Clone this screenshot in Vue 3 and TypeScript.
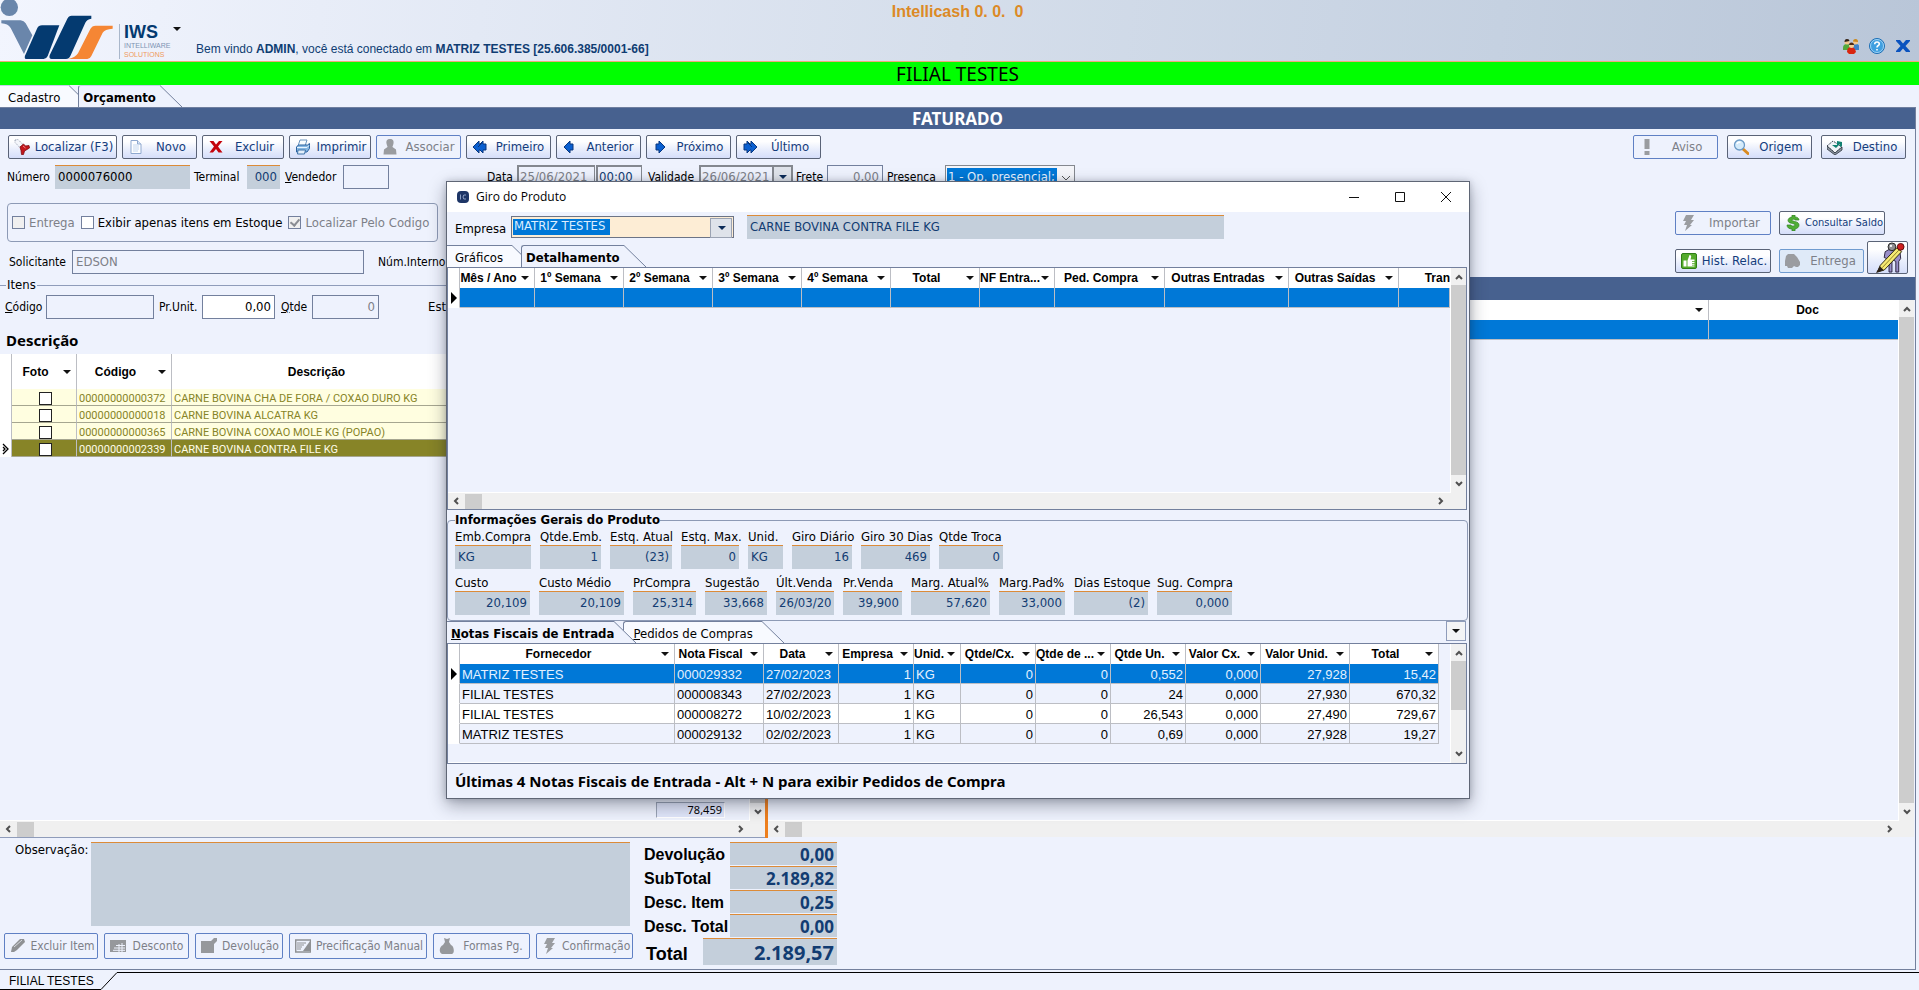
<script setup lang="ts">
interface ToolButton {
  label: string
  icon: string
  size: string
  disabled?: boolean
}
interface Field {
  label: string
  value: string
  width: number
  left?: boolean
}
interface Column {
  title: string
  width: number
  align?: string
}

const icons: Record<string, string> = {
  torch:
    '<path d="M1 1l3-.5 5 5-3 3-5-5z" fill="#f4f6fb" stroke="#8a94a6" stroke-width=".8" stroke-dasharray="1.500 1"/><path d="M6 8l3.500-3 2 2 3.500-.5.5 2.500-5 3-1 3.500H7.500l-.5-4z" fill="#c3161c" stroke="#7d0a10" stroke-width=".8"/><path d="M9 7l2.500 2" stroke="#f0868a"/>',
  page:
    '<path d="M3 1.500h6.500l3.500 3.500v9.500H3z" fill="#fdfeff" stroke="#8fa9cf"/><path d="M9.500 1.500V5H13" fill="#dbe8f8" stroke="#8fa9cf"/><path d="M5 6h6M5 8h6M5 10h6M5 12h5" stroke="#c5d8ef"/>',
  cross: '<path d="M1.500 2h4l2.500 3.500L11 2h3.500L10 7.500l4.500 6h-4L8 10l-3 3.500H1.500L6 7.500z" fill="#c4040c"/>',
  printer:
    '<path d="M5 1h7l-2 6H3z" fill="#fafdff" stroke="#6b93bd"/><path d="M1.500 8l2-2h9l2-1.500v5L12 13H1.500z" fill="#86b7e2" stroke="#2b629f"/><path d="M2 8.500h10l2-2" stroke="#e8f4ff" fill="none"/><path d="M3 11h7.500l-1 4H2.500z" fill="#e3effa" stroke="#3f73aa"/>',
  person:
    '<path d="M8 0c3 0 4 2 3.500 4.500-.4 2-1 2.500-1 3.500l3.500 2.500 .5 5h-13l.5-5 3.500-2.500c0-1-.6-1.500-1-3.500C4 2 5 0 8 0z" fill="#9a9ca0"/>',
  first:
    '<path d="M1 8l6-6v3h1L11 2v3h3v6h-3v3L8 11H7v3z" fill="#0a5fd0" stroke="#08367e"/><path d="M6 8l4-4" stroke="#08367e"/>',
  prev: '<path d="M2 8l6-6v3h3v6H8v3z" fill="#0a5fd0" stroke="#08367e"/>',
  next: '<path d="M13 8L7 2v3H4v6h3v3z" fill="#0a5fd0" stroke="#08367e"/>',
  last: '<path d="M15 8L9 2v3H8L5 2v3H2v6h3v3l3-3h1v3z" fill="#0a5fd0" stroke="#08367e"/><path d="M10 8L6 4" stroke="#08367e"/>',
  alert: '<path d="M5.500 0h5v10h-5zM5.500 12h5v4h-5z" fill="#9a9ca0"/>',
  lens:
    '<path d="M10 10l5 4.500" stroke="#d98a1f" stroke-width="3" stroke-linecap="round"/><circle cx="6.500" cy="6" r="5" fill="#d4ebfb" stroke="#6b9ac6" stroke-width="1.300"/><path d="M4 5c.5-1.500 2-2 3.500-1.500" stroke="#fff" fill="none" stroke-width="1.500"/>',
  destination:
    '<path d="M0 7l6-5 9 6-7 6z" fill="#f1f3f6" stroke="#3c4653" stroke-dasharray="2 1"/><path d="M0 7v3l8 6 7-5V8L8 14z" fill="#8d96a2" stroke="#2b323c" stroke-width=".8"/><path d="M5 6h5V2l5 1v4l-2 1V5l-4 4z" fill="#128171"/>',
  bolt: '<path d="M5 0h8L10 5h3L9 10h2l-7 6 2-6H3l2-4H2z" fill="#9a9ca0"/>',
  dollar:
    '<path d="M7 0h3v2c2 0 4 1 4 3h-4c0-1-3-1-3 .2C7 6.600 14 6 14 10c0 2.500-2 3.500-4 4v2H7v-2c-3 0-5-1.500-5-4h4c0 1.500 4 1.500 4 0C10 8 3 9 3 5.500 3 3.500 5 2.200 7 2z" fill="#4fae35" stroke="#2f8023" stroke-width=".7"/>',
  thumb:
    '<rect x=".5" y=".5" width="15" height="15" rx="1.500" fill="#55ab2c" stroke="#2f7d17"/><path d="M2.500 7.500h3v6h-3zM6.500 7.500L8.500 2c1.500 0 2 1 1.500 2.500L9.500 6.500H13.500v7h-7z" fill="#fff"/><path d="M11 8.500h3M11 10.500h3M11 12.200h3" stroke="#55ab2c" stroke-width=".8"/>',
  truck: '<path d="M1 3l2-2h6l3 3 3 5v3l-2 2h-2l-2-1-2 2H3l-1-2H0V8z" fill="#9a9ca0"/>',
  eraser: '<path d="M2 9l8-8h4l1 3-8 8-3 2H1z" fill="#8f9194"/><path d="M4 9l8-7" stroke="#d6d9de"/>',
  table:
    '<path d="M0 2h16v12H0z" fill="#96989c"/><path d="M6 7.500h9M4 10h11M3 12.300h12M9 6v8M12 5v9" stroke="#eef2fd"/>',
  box: '<path d="M0 3h10l3-3h3v3l-3 3v9H0z" fill="#96989c"/>',
  sheet:
    '<path d="M.7 2h15v12H.700z" fill="#eef2fd" stroke="#8f9194" stroke-width="1.500"/><path d="M15 3v10H8z" fill="#8f9194"/><path d="M2 5h9M2 7h7M2 9h5M2 11h4" stroke="#8f9194"/>',
  bag: '<path d="M5 0l3 1 3-1-1 4 2 3c3 1 4 8 1 9H3C-1 14 1 8 4 7l2-3z" fill="#96989c"/>',
}

const navButtons: ToolButton[] = [
  { label: 'Localizar (F3)', icon: 'torch', size: 'w109' },
  { label: 'Novo', icon: 'page', size: 'w75' },
  { label: 'Excluir', icon: 'cross', size: 'w82' },
  { label: 'Imprimir', icon: 'printer', size: 'w82' },
  { label: 'Associar', icon: 'person', size: 'w85', disabled: true },
  { label: 'Primeiro', icon: 'first', size: 'w85' },
  { label: 'Anterior', icon: 'prev', size: 'w85' },
  { label: 'Próximo', icon: 'next', size: 'w85' },
  { label: 'Último', icon: 'last', size: 'w85' },
]
const sideButtons: ToolButton[] = [
  { label: 'Aviso', icon: 'alert', size: 'w85', disabled: true },
  { label: 'Origem', icon: 'lens', size: 'w85' },
  { label: 'Destino', icon: 'destination', size: 'w85' },
]
const footButtons: ToolButton[] = [
  { label: 'Excluir Item', icon: 'eraser', size: 'w94' },
  { label: 'Desconto', icon: 'table', size: 'w85' },
  { label: 'Devolução', icon: 'box', size: 'w88' },
  { label: 'Precificação Manual', icon: 'sheet', size: 'w138' },
  { label: 'Formas Pg.', icon: 'bag', size: 'w97' },
  { label: 'Confirmação', icon: 'bolt', size: 'w97' },
]

const itemRows = [
  { code: '00000000000372', name: 'CARNE BOVINA CHA DE FORA / COXAO DURO KG' },
  { code: '00000000000018', name: 'CARNE BOVINA ALCATRA KG' },
  { code: '00000000000365', name: 'CARNE BOVINA COXAO MOLE KG (POPAO)' },
  { code: '00000000002339', name: 'CARNE BOVINA CONTRA FILE KG' },
]

const turnoverColumns: Column[] = [
  { title: 'Mês / Ano', width: 75 },
  { title: '1º Semana', width: 89 },
  { title: '2º Semana', width: 89 },
  { title: '3º Semana', width: 89 },
  { title: '4º Semana', width: 89 },
  { title: 'Total', width: 89 },
  { title: 'NF Entra...', width: 75 },
  { title: 'Ped. Compra', width: 110 },
  { title: 'Outras Entradas', width: 124 },
  { title: 'Outras Saídas', width: 110 },
]

const infoRows: Field[][] = [
  [
    { label: 'Emb.Compra', value: 'KG', width: 76, left: true },
    { label: 'Qtde.Emb.', value: '1', width: 61 },
    { label: 'Estq. Atual', value: '(23)', width: 62 },
    { label: 'Estq. Max.', value: '0', width: 58 },
    { label: 'Unid.', value: 'KG', width: 35, left: true },
    { label: 'Giro Diário', value: '16', width: 60 },
    { label: 'Giro 30 Dias', value: '469', width: 69 },
    { label: 'Qtde Troca', value: '0', width: 64 },
  ],
  [
    { label: 'Custo', value: '20,109', width: 75 },
    { label: 'Custo Médio', value: '20,109', width: 85 },
    { label: 'PrCompra', value: '25,314', width: 63 },
    { label: 'Sugestão', value: '33,668', width: 62 },
    { label: 'Últ.Venda', value: '26/03/20', width: 58, left: true },
    { label: 'Pr.Venda', value: '39,900', width: 59 },
    { label: 'Marg. Atual%', value: '57,620', width: 79 },
    { label: 'Marg.Pad%', value: '33,000', width: 66 },
    { label: 'Dias Estoque', value: '(2)', width: 74 },
    { label: 'Sug. Compra', value: '0,000', width: 75 },
  ],
]

const invoiceColumns: Column[] = [
  { title: 'Fornecedor', width: 215 },
  { title: 'Nota Fiscal', width: 89 },
  { title: 'Data', width: 75 },
  { title: 'Empresa', width: 75, align: 'num' },
  { title: 'Unid.', width: 47 },
  { title: 'Qtde/Cx.', width: 75, align: 'num' },
  { title: 'Qtde de ...', width: 75, align: 'num' },
  { title: 'Qtde Un.', width: 75, align: 'num' },
  { title: 'Valor Cx.', width: 75, align: 'num' },
  { title: 'Valor Unid.', width: 89, align: 'num' },
  { title: 'Total', width: 89, align: 'num' },
]
const invoices = [
  ['MATRIZ TESTES', '000029332', '27/02/2023', '1', 'KG', '0', '0', '0,552', '0,000', '27,928', '15,42'],
  ['FILIAL TESTES', '000008343', '27/02/2023', '1', 'KG', '0', '0', '24', '0,000', '27,930', '670,32'],
  ['FILIAL TESTES', '000008272', '10/02/2023', '1', 'KG', '0', '0', '26,543', '0,000', '27,490', '729,67'],
  ['MATRIZ TESTES', '000029132', '02/02/2023', '1', 'KG', '0', '0', '0,69', '0,000', '27,928', '19,27'],
]

const totals = [
  { id: 't-dev', label: 'Devolução', value: '0,00' },
  { id: 't-sub', label: 'SubTotal', value: '2.189,82' },
  { id: 't-item', label: 'Desc. Item', value: '0,25' },
  { id: 't-desc', label: 'Desc. Total', value: '0,00' },
]

const px = (n: number) => ({ width: n + 'px' })
</script>

<template>
  <div class="app">
    <header class="top">
      <svg class="logo" viewBox="0 0 342 180" aria-hidden="true">
        <circle cx="28" cy="22" r="26" fill="#6a86ab" />
        <path d="M4 61H62Q72 62 77 70L97 106 72 162 32 84Q24 71 4 70Z" fill="#6a86ab" />
        <path d="M178 76H126Q116 76 111 86L75 167Q72 177 80 177H131Q139 177 143 168Z" fill="#043a70" />
        <path d="M274 47H215Q206 47 202 56L149 166Q146 177 155 177H198Q207 177 211 168L256 68Q261 57 274 56Z" fill="#043a70" />
        <path d="M338 77H287Q276 77 271 87L234 160Q227 172 205 177H262Q270 177 274 168L308 98Q314 87 338 86Z" fill="#f58634" />
      </svg>
      <div class="brand">
        <strong>IWS</strong>
        <span>INTELLIWARE</span>
        <em>SOLUTIONS</em>
      </div>
      <button class="caret-btn" aria-label="Menu"><i class="caret"></i></button>
      <p class="welcome">
        Bem vindo <b>ADMIN</b>, você está conectado em <b>MATRIZ TESTES [25.606.385/0001-66]</b>
      </p>
      <h1 class="product">Intellicash 0. 0. &nbsp;0</h1>
      <div class="session">
        <button aria-label="Usuários">
          <svg viewBox="0 0 16 16">
            <path d="M0 10q0-4 4-4t4 4v2H0z" fill="#54a83a" />
            <path d="M9 10q0-4 4-4t3 4v2H9z" fill="#3d82c9" />
            <circle cx="4" cy="4" r="2.500" fill="#f3c68c" />
            <path d="M1.500 4q0-3 2.500-3t2.500 2z" fill="#2e1e14" />
            <circle cx="12.500" cy="4" r="2.500" fill="#f3c68c" />
            <path d="M10 3.500q0-2.500 2.500-2.500t2.500 3z" fill="#c9891f" />
            <path d="M4 14q0-5 4-5t5 5l-2 2H6z" fill="#d9260f" />
            <circle cx="8.500" cy="7.500" r="2.500" fill="#f6cd96" />
            <path d="M6 7q0-2.500 2.500-2.500T11 7z" fill="#4f2a14" />
          </svg>
        </button>
        <button aria-label="Ajuda">
          <svg viewBox="0 0 16 16">
            <circle cx="8" cy="8" r="7.500" fill="#3f9fe0" stroke="#1c6fb5" />
            <circle cx="8" cy="8" r="6.500" fill="none" stroke="#9fd2f5" />
            <path d="M5.700 6.200Q5.800 4 8 4t2.300 2Q10.300 7 9 7.800 8 8.400 8 9.500M8 11v1.500" fill="none" stroke="#fff" stroke-width="1.600" />
          </svg>
        </button>
        <button aria-label="Fechar">
          <svg viewBox="0 0 16 16">
            <path d="M1 2h4l3 3.500L11 2h4v1l-4.500 5 4.500 5v1h-4l-3-3.500L5 14H1v-1l4.500-5L1 3z" fill="#0a53bf" />
          </svg>
        </button>
      </div>
    </header>

    <div class="branch">FILIAL TESTES</div>

    <nav class="tabs main-tabs">
      <button class="tab">
        <span>Cadastro</span>
        <svg viewBox="0 0 22 22"><path d="M0 0L22 22H0Z" fill="#f8faff" /><path d="M0 .5L22 22" /></svg>
      </button>
      <button class="tab active">
        <span>Orçamento</span>
        <svg viewBox="0 0 22 22"><path d="M0 0L22 22H0Z" fill="#eef2fd" /><path d="M0 .5L22 22" /></svg>
      </button>
    </nav>

    <main class="page">
      <h2 class="bar">FATURADO</h2>

      <div class="toolbar">
        <button v-for="b in navButtons" :key="b.label" class="btn" :class="b.size" :disabled="b.disabled">
          <svg viewBox="0 0 16 16" v-html="icons[b.icon]"></svg><span>{{ b.label }}</span>
        </button>
        <div class="side">
          <button v-for="b in sideButtons" :key="b.label" class="btn" :class="b.size" :disabled="b.disabled">
            <svg viewBox="0 0 16 16" v-html="icons[b.icon]"></svg><span>{{ b.label }}</span>
          </button>
        </div>
      </div>

      <div class="order">
        <div class="order-form">
          <div class="line heading-line">
            <label class="f-num"><span>Número</span><input class="ro black" value="0000076000" readonly /></label>
            <label class="f-term"><span>Terminal</span><input class="ro num" value="000" readonly /></label>
            <label class="f-vend"><span><u>V</u>endedor</span><input class="box" value="" /></label>
            <label class="f-data"><span>Data</span><input class="box gray sunken" value="25/06/2021" disabled /></label>
            <input class="box time sunken" value="00:00" aria-label="Hora" />
            <label class="f-val"><span>Validade</span><input class="box gray sunken" value="26/06/2021" disabled /></label>
            <button class="drop" aria-label="Abrir calendário" disabled><i class="caret navy"></i></button>
            <label class="f-frete"><span>Frete</span><input class="box gray num" value="0,00" disabled /></label>
            <label class="f-pres">
              <span>Presença</span><select><option>1 - Op. presencial;</option></select>
              <svg viewBox="0 0 10 6"><path d="M1 1l4 4 4-4" /></svg>
            </label>
          </div>
          <div class="checks">
            <label class="gray"><input type="checkbox" disabled /><span>Entrega</span></label>
            <label><input type="checkbox" /><span>Exibir apenas itens em Estoque</span></label>
            <label class="gray"><input type="checkbox" checked disabled /><span>Localizar Pelo Codigo</span></label>
          </div>
          <div class="line request">
            <label class="f-sol"><span>Solicitante</span><input class="box gray" value="EDSON" disabled /></label>
            <label class="f-int"><span>Núm.Interno</span><input class="box" value="" /></label>
          </div>
        </div>
        <div class="order-actions">
          <div>
            <button class="btn w96" disabled><svg viewBox="0 0 16 16" v-html="icons.bolt"></svg><span>Importar</span></button>
            <button class="btn w106 small"><svg viewBox="0 0 16 16" v-html="icons.dollar"></svg><span>Consultar Saldo</span></button>
          </div>
          <div class="second">
            <button class="btn w96"><svg viewBox="0 0 16 16" v-html="icons.thumb"></svg><span>Hist. Relac.</span></button>
            <button class="btn w85 tinted" disabled><svg viewBox="0 0 16 16" v-html="icons.truck"></svg><span>Entrega</span></button>
            <button class="btn pencil" aria-label="Editar">
              <svg viewBox="0 0 34 32">
                <path d="M12 10l7-4 8 1 1 10-2 3v11h-3V20l-4-2v13h-3V18l-5-2z" fill="#9a8fc9" stroke="#2a2440" />
                <circle cx="19" cy="5" r="4" fill="#8f8f92" stroke="#222" />
                <circle cx="18" cy="4" r="1.200" fill="#fff" />
                <path d="M24 6l5 4L11 29l-7 2 3-7z" fill="#f6ea73" stroke="#2b2710" />
                <path d="M26.500 8L9 26.500" stroke="#8d8126" />
                <path d="M6.500 25l4 4-8 3z" fill="#2b2118" />
                <circle cx="28" cy="5" r="3.500" fill="#cf1f1f" stroke="#5a0d0d" />
              </svg>
            </button>
          </div>
        </div>
      </div>

      <div class="panes">
        <section class="pane-left">
          <fieldset class="itens">
            <legend>Itens</legend>
            <label class="f-cod"><span><u>C</u>ódigo</span><input class="box" value="" /></label>
            <label class="f-unit"><span>Pr.Unit.</span><input class="box white num" value="0,00" /></label>
            <label class="f-qtde"><span><u>Q</u>tde</span><input class="box gray num" value="0" disabled /></label>
            <span class="stock">Estoque</span>
          </fieldset>
          <h3>Descrição</h3>
          <div class="list-area">
            <div class="list">
              <table class="items">
                <colgroup><col class="c12" /><col class="c65" /><col class="c95" /><col class="c307" /><col /></colgroup>
                <thead>
                  <tr>
                    <th></th>
                    <th><div><span>Foto</span><i class="caret"></i></div></th>
                    <th><div><span>Código</span><i class="caret"></i></div></th>
                    <th><div><span>Descrição</span><i class="caret"></i></div></th>
                    <th></th>
                  </tr>
                </thead>
                <tbody>
                  <tr v-for="(r, i) in itemRows" :key="r.code" :class="{ sel: i === 3 }">
                    <td class="mark">
                      <svg v-if="i === 3" viewBox="0 0 8 12"><path d="M1 1l5 5-5 5M1 4l2 2-2 2" fill="none" stroke="#000" stroke-width="1.300" /></svg>
                    </td>
                    <td class="pic"><input type="checkbox" :aria-label="'Foto ' + r.code" /></td>
                    <td>{{ r.code }}</td>
                    <td>{{ r.name }}</td>
                    <td></td>
                  </tr>
                </tbody>
              </table>
              <div class="sum"><output>78,459</output></div>
            </div>
            <div class="vs">
              <svg viewBox="0 0 8 8"><path d="M1 6l3-3 3 3" /></svg><i class="fill"></i>
              <svg viewBox="0 0 8 8"><path d="M1 2l3 3 3-3" /></svg>
            </div>
          </div>
          <div class="hs">
            <svg viewBox="0 0 8 8"><path d="M6 1L3 4l3 3" /></svg><i></i>
            <svg class="end" viewBox="0 0 8 8"><path d="M2 1l3 3-3 3" /></svg>
          </div>
        </section>
        <div class="splitter"></div>
        <section class="pane-right">
          <div class="bar"></div>
          <div class="list-area">
            <div class="list">
              <table class="docs">
                <colgroup><col /><col class="c189" /></colgroup>
                <thead><tr><th><div><span></span><i class="caret"></i></div></th><th class="doc">Doc</th></tr></thead>
                <tbody><tr><td></td><td></td></tr></tbody>
              </table>
            </div>
            <div class="vs">
              <svg viewBox="0 0 8 8"><path d="M1 6l3-3 3 3" /></svg><i class="fill"></i>
              <svg viewBox="0 0 8 8"><path d="M1 2l3 3 3-3" /></svg>
            </div>
          </div>
          <div class="hs">
            <svg viewBox="0 0 8 8"><path d="M6 1L3 4l3 3" /></svg><i></i>
            <svg class="end" viewBox="0 0 8 8"><path d="M2 1l3 3-3 3" /></svg>
          </div>
        </section>
      </div>

      <div class="foot">
        <div class="notes">
          <label class="obs"><span>Observação:</span><textarea readonly></textarea></label>
          <div class="foot-btns">
            <button v-for="b in footButtons" :key="b.label" class="btn tall" :class="b.size" disabled>
              <svg viewBox="0 0 16 16" v-html="icons[b.icon]"></svg><span>{{ b.label }}</span>
            </button>
          </div>
        </div>
        <div class="totals">
          <div v-for="t in totals" :key="t.id" class="t-row">
            <label :for="t.id">{{ t.label }}</label><input :id="t.id" class="ro num" :value="t.value" readonly />
          </div>
          <div class="t-row grand"><label for="t-all">Total</label><input id="t-all" class="ro num" value="2.189,57" readonly /></div>
        </div>
      </div>
    </main>

    <footer class="status">
      <span>FILIAL TESTES</span>
      <svg viewBox="0 0 16 18"><path d="M0 17.500L16 .5" /></svg>
      <i></i>
    </footer>

    <section class="dialog" role="dialog" aria-label="Giro do Produto">
      <header class="title">
        <svg class="app-icon" viewBox="0 0 12 14">
          <rect y="1" width="12" height="12" rx="4" fill="#1d3566" />
          <path d="M3.500 4.500v5M9 5Q6 4 6 7t3 2" fill="none" stroke="#8c9fc4" />
        </svg>
        <h2>Giro do Produto</h2>
        <button aria-label="Minimizar"><svg viewBox="0 0 12 12"><path d="M1 6.500h10" /></svg></button>
        <button aria-label="Maximizar"><svg viewBox="0 0 12 12"><path d="M1.500 1.500h9v9h-9z" /></svg></button>
        <button aria-label="Fechar"><svg viewBox="0 0 12 12"><path d="M1 1l10 10M11 1L1 11" /></svg></button>
      </header>

      <div class="company">
        <label><span>Empresa</span><select><option>MATRIZ TESTES</option></select></label>
        <input class="ro" value="CARNE BOVINA CONTRA FILE KG" aria-label="Produto" readonly />
      </div>

      <nav class="tabs upper">
        <button class="tab"><span>Gráficos</span><svg viewBox="0 0 22 22"><path d="M0 0L22 22H0Z" fill="#f8faff" /><path d="M0 .5L22 22" /></svg></button>
        <button class="tab active"><span>Detalhamento</span><svg viewBox="0 0 22 22"><path d="M0 0L22 22H0Z" fill="#eef2fd" /><path d="M0 .5L22 22" /></svg></button>
      </nav>

      <div class="panel turnover">
        <div class="list-area">
          <div class="list">
            <table class="grid stretch">
              <colgroup><col class="c12" /><col v-for="c in turnoverColumns" :key="c.title" :style="px(c.width)" /><col /></colgroup>
              <thead>
                <tr>
                  <th></th>
                  <th v-for="c in turnoverColumns" :key="c.title"><div><span>{{ c.title }}</span><i class="caret"></i></div></th>
                  <th class="cut">Tran</th>
                </tr>
              </thead>
              <tbody>
                <tr class="sel"><td class="mark"><i class="pointer"></i></td><td v-for="n in 11" :key="n"></td></tr>
              </tbody>
            </table>
          </div>
          <div class="vs">
            <svg viewBox="0 0 8 8"><path d="M1 6l3-3 3 3" /></svg><i class="fill"></i>
            <svg viewBox="0 0 8 8"><path d="M1 2l3 3 3-3" /></svg>
          </div>
        </div>
        <div class="hs corner">
          <svg viewBox="0 0 8 8"><path d="M6 1L3 4l3 3" /></svg><i></i>
          <svg class="end" viewBox="0 0 8 8"><path d="M2 1l3 3-3 3" /></svg>
        </div>
      </div>

      <fieldset class="info">
        <legend>Informações Gerais do Produto</legend>
        <div v-for="(row, i) in infoRows" :key="i" class="info-row">
          <label v-for="f in row" :key="f.label" :style="px(f.width)">
            <span>{{ f.label }}</span><input class="ro" :class="{ num: !f.left }" :value="f.value" readonly />
          </label>
        </div>
      </fieldset>

      <nav class="tabs lower">
        <button class="tab active"><span><u>N</u>otas Fiscais de Entrada</span><svg viewBox="0 0 22 22"><path d="M0 0L22 22H0Z" fill="#eef2fd" /><path d="M0 .5L22 22" /></svg></button>
        <button class="tab"><span><u>P</u>edidos de Compras</span><svg viewBox="0 0 22 22"><path d="M0 0L22 22H0Z" fill="#f8faff" /><path d="M0 .5L22 22" /></svg></button>
        <button class="more" aria-label="Mais abas"><i class="caret"></i></button>
      </nav>

      <div class="panel invoices">
        <div class="list-area">
          <div class="list">
            <table class="grid">
              <colgroup><col class="c12" /><col v-for="c in invoiceColumns" :key="c.title" :style="px(c.width)" /></colgroup>
              <thead>
                <tr>
                  <th></th>
                  <th v-for="c in invoiceColumns" :key="c.title"><div><span>{{ c.title }}</span><i class="caret"></i></div></th>
                </tr>
              </thead>
              <tbody>
                <tr v-for="(r, i) in invoices" :key="r[1]" :class="{ sel: i === 0 }">
                  <td class="mark"><i v-if="i === 0" class="pointer"></i></td>
                  <td v-for="(v, c) in r" :key="c" :class="invoiceColumns[c].align">{{ v }}</td>
                </tr>
              </tbody>
            </table>
          </div>
          <div class="vs">
            <svg viewBox="0 0 8 8"><path d="M1 6l3-3 3 3" /></svg><i class="part"></i>
            <svg class="end" viewBox="0 0 8 8"><path d="M1 2l3 3 3-3" /></svg>
          </div>
        </div>
      </div>

      <p class="hint">Últimas 4 Notas Fiscais de Entrada - Alt + N para exibir Pedidos de Compra</p>
    </section>
  </div>
</template>

<style>
body {
  background: #eef2fd;
}
</style>

<style scoped>
* {
  box-sizing: border-box;
}
.app {
  --ui: "DejaVu Sans Condensed", "Noto Sans", sans-serif;
  --grid: "Liberation Sans", Arial, sans-serif;
  --bg: #eef2fd;
  --edge: #73809d;
  --ro: #c4cfdb;
  --orange: #dc8b38;
  --navy: #123c72;
  position: relative;
  display: flex;
  flex-direction: column;
  height: 100vh;
  min-height: 860px;
  overflow: hidden;
  background: var(--bg);
  color: #000;
  font: 13px/16px var(--ui);
}
h1, h2, h3, p {
  margin: 0;
}
button, input, select, textarea {
  font: inherit;
  color: inherit;
  margin: 0;
  padding: 0;
  border: 0;
  border-radius: 0;
  background: none;
}
label, .btn, .tab {
  white-space: nowrap;
}
.caret {
  flex: none;
  width: 0;
  border: 4px solid transparent;
  border-top-color: #111;
  border-bottom: 0;
}
.caret.navy {
  border-top-color: #0d2c58;
}

/* header */
.top {
  flex: none;
  display: flex;
  position: relative;
  height: 62px;
  border-bottom: 1px solid #f0a878;
  background: linear-gradient(97deg, #f2f5fe 0%, #e3e9f5 25%, #d5deeb 50%, #c5d1e1 78%, #b9c6d8 100%);
}
.logo {
  width: 114px;
  height: 60px;
}
.brand {
  display: flex;
  flex-direction: column;
  align-self: flex-start;
  width: 50px;
  margin: 24px 0 0 5px;
  padding-left: 4px;
  border-left: 1px solid #a9b7cb;
  font-family: var(--grid);
  font-size: 7px;
  line-height: 9px;
  color: #7d93b3;
}
.brand strong {
  font-size: 18px;
  line-height: 17px;
  color: #043a70;
}
.brand em {
  font-style: normal;
  color: #ef9a5c;
}
.caret-btn {
  align-self: flex-start;
  margin: 27px 14px 0 4px;
}
.caret-btn .caret {
  display: block;
}
.welcome {
  margin: 40px 0 0 1px;
  font: 12px/18px var(--grid);
  color: #0f3d73;
}
.product {
  position: absolute;
  left: 0;
  right: 4px;
  top: 2px;
  text-align: center;
  font: bold 16px/20px var(--grid);
  color: #dc8a26;
}
.session {
  display: flex;
  gap: 10px;
  margin: 38px 8px 0 auto;
}
.session button, .session svg {
  display: block;
  width: 16px;
  height: 16px;
}
.branch {
  flex: none;
  height: 23px;
  padding-right: 4px;
  background: #00ff00;
  text-align: center;
  font: 19px/24px "Noto Sans", sans-serif;
}

/* tabs */
.tabs {
  flex: none;
  display: flex;
  height: 22px;
}
.tab {
  display: flex;
  height: 22px;
}
.tab span {
  padding: 2px 9px 0 8px;
  border-top: 1px solid var(--edge);
  background: #f8faff;
  line-height: 19px;
}
.tab + .tab span {
  border-left: 1px solid var(--edge);
  border-top-left-radius: 3px;
}
.tab.active {
  position: relative;
  z-index: 1;
}
.tab.active span {
  padding-right: 4px;
  padding-left: 4px;
  background: var(--bg);
  font-weight: bold;
}
.tab svg {
  width: 22px;
  height: 22px;
}
.tab path + path {
  fill: none;
  stroke: var(--edge);
}
.tab + .tab {
  margin-left: -13px;
}
.main-tabs .tab span {
  border-top-color: #c5d2e8;
}
.lower .tab.active span {
  padding-right: 0;
}
.lower .tab + .tab span {
  padding: 2px 9px 0 9px;
}

/* page */
.page {
  flex: 1;
  display: flex;
  flex-direction: column;
  min-height: 0;
  margin-right: 3px;
  border-right: 1px solid var(--edge);
  border-bottom: 1px solid var(--edge);
}
.bar {
  flex: none;
  height: 22px;
  border-top: 1px solid #6f7f9f;
  background: #47618f;
  color: #fff;
  text-align: center;
  font: bold 17px/22px "Noto Sans", sans-serif;
}
.toolbar {
  display: flex;
  gap: 5px;
  padding: 6px 9px 0 8px;
}
.side {
  display: flex;
  gap: 9px;
  margin-left: auto;
}
.btn {
  display: flex;
  align-items: center;
  gap: 4px;
  height: 24px;
  padding: 0 2px 1px 5px;
  border: 1px solid #5a6377;
  border-radius: 2px;
  background: linear-gradient(#fefeff 25%, #e9eefc 60%, #d5defa);
  color: #143c7c;
}
.btn svg {
  flex: none;
  width: 16px;
  height: 16px;
}
.btn span {
  flex: 1;
  text-align: center;
}
.btn:disabled {
  border-color: #5f80c4;
  background: var(--bg);
  color: #7d8088;
}
.btn.tinted {
  border-color: #6f9bd0;
  background: #dfeaf8;
}
.btn.small {
  font-size: 11px;
}
.btn.tall {
  height: 26px;
  font-size: 12px;
}
.w75 { width: 75px; }
.w82 { width: 82px; }
.w85 { width: 85px; }
.w88 { width: 88px; }
.w94 { width: 94px; }
.w96 { width: 96px; }
.w97 { width: 97px; }
.w106 { width: 106px; }
.w109 { width: 109px; }
.w138 { width: 138px; }

.ro, .box {
  height: 24px;
  padding: 0 3px 2px;
}
.ro {
  border-top: 1px solid var(--orange);
  background: var(--ro);
  color: var(--navy);
}
.box {
  border: 1px solid var(--edge);
  background: var(--bg);
}
.black {
  color: #000;
}
.gray {
  color: #7d8088;
}
.white {
  background: #fff;
}
.sunken {
  padding: 0 0 3px 1px;
  border-width: 2px 1px 1px 2px;
  border-color: #84888f;
}
.num {
  text-align: right;
}
label > span {
  flex: none;
}

.order {
  display: flex;
  justify-content: space-between;
  height: 118px;
}
.line, .line label, .itens label {
  display: flex;
  align-items: center;
}
.line label span, .itens label span {
  font-size: 12px;
}
.heading-line {
  margin-top: 6px;
  padding-left: 7px;
  height: 24px;
}
.f-num span { width: 48px; }
.f-num input { width: 135px; }
.f-term { margin-left: 4px; }
.f-term span { width: 53px; }
.f-term input { width: 33px; }
.f-vend { margin-left: 5px; }
.f-vend span { width: 58px; }
.f-vend input { width: 46px; }
.f-data { margin-left: 98px; }
.f-data span { width: 30px; }
.f-data input { width: 78px; }
.time {
  width: 46px;
  margin-left: 1px;
  color: var(--navy);
}
.f-val { margin-left: 6px; }
.f-val span { width: 51px; }
.f-val input {
  width: 73px;
  border-right: 0;
}
.drop {
  width: 21px;
  height: 24px;
  border: 2px solid #84888f;
  background: #dfe3ea;
}
.drop .caret {
  display: block;
  margin: 0 auto;
}
.f-frete { margin-left: 3px; }
.f-frete span { width: 31px; }
.f-frete input { width: 56px; }
.f-pres {
  position: relative;
  margin-left: 4px;
}
.f-pres span { width: 58px; }
.f-pres select {
  width: 130px;
  height: 24px;
  padding-left: 2px;
  appearance: none;
  border: 1px solid #84888f;
  background: linear-gradient(#0078d7, #0078d7) 1px 2px / 110px 20px no-repeat #f4f5f9;
  color: #e6f2ff;
}
.f-pres svg {
  position: absolute;
  right: 4px;
  top: 10px;
  width: 10px;
  height: 6px;
  fill: none;
  stroke: #555;
  pointer-events: none;
}
.checks {
  display: flex;
  align-items: center;
  gap: 6px;
  width: 431px;
  height: 39px;
  margin: 14px 0 0 7px;
  padding-left: 4px;
  border: 1px solid #8d9ab5;
  border-radius: 4px;
}
.checks label {
  display: flex;
  align-items: center;
  gap: 4px;
}
input[type="checkbox"] {
  appearance: none;
  display: grid;
  place-items: center;
  width: 13px;
  height: 13px;
  border: 1px solid var(--edge);
  background: #fff;
}
input[type="checkbox"]:disabled {
  background: #f0f0f0;
}
input[type="checkbox"]:checked::before {
  content: "";
  width: 4px;
  height: 7px;
  margin-bottom: 2px;
  border: solid #8a8d93;
  border-width: 0 2px 2px 0;
  rotate: 40deg;
}
.request {
  margin-top: 8px;
  padding-left: 9px;
}
.f-sol span { width: 63px; }
.f-sol input { width: 292px; }
.f-int { margin-left: 14px; }
.f-int span { width: 72px; }
.f-int input { width: 90px; }
.order-actions {
  padding: 52px 7px 0 0;
}
.order-actions > div {
  display: flex;
  gap: 8px;
}
.order-actions .second {
  align-items: flex-end;
  height: 32px;
  margin-top: 7px;
}
.second .btn {
  margin-bottom: 1px;
}
.order-actions .btn.pencil {
  width: 41px;
  height: 33px;
  margin: 0 0 0 -5px;
  padding: 0 2px 0 5px;
}
.pencil svg {
  width: 34px;
  height: 31px;
}

/* panes */
.panes {
  flex: 1;
  display: flex;
  min-height: 0;
}
.pane-left, .pane-right {
  display: flex;
  flex-direction: column;
  min-width: 0;
}
.pane-left {
  flex: 0 0 calc(40% - 1px);
  border-bottom: 1px solid #8f9cba;
}
.pane-right {
  flex: 1;
  margin: 0 1px 1px 0;
}
.pane-right .bar {
  height: 23px;
  margin-right: -1px;
  border: 0;
}
.splitter {
  width: 3px;
  background: #ee7f1d;
}
.itens {
  display: flex;
  margin: 0;
  padding: 2px 0 0 5px;
  border: 0;
  border-top: 1px solid #8f9cba;
}
.itens legend {
  margin-left: 1px;
  padding: 0 1px;
}
.f-cod span { width: 41px; }
.f-cod input { width: 108px; }
.f-unit { margin-left: 5px; }
.f-unit span { width: 43px; }
.f-unit input { width: 73px; }
.f-qtde { margin-left: 6px; }
.f-qtde span { width: 31px; }
.f-qtde input { width: 67px; }
.stock {
  margin: 4px 0 0 49px;
}
.pane-left h3 {
  height: 35px;
  padding: 9px 0 0 6px;
  font: bold 15px/25px "Noto Sans", sans-serif;
}
.list-area {
  flex: 1;
  display: flex;
  min-height: 0;
}
.list {
  flex: 1;
  min-width: 0;
  overflow: hidden;
  border-right: 1px solid #fff;
  border-bottom: 1px solid #fff;
}
.pane-left .list {
  display: flex;
  flex-direction: column;
}
.sum {
  margin: auto 24px 2px auto;
  width: 69px;
  border: 1px solid #9aa3b5;
  border-right-color: #fff;
  border-bottom-color: #fff;
  background: #e0e6fa;
  font: 11px/14px "Noto Sans", sans-serif;
  text-align: right;
}
.sum output {
  display: block;
  padding-right: 2px;
}
table {
  table-layout: fixed;
  border-collapse: separate;
  border-spacing: 0;
  font-family: var(--grid);
}
th, td {
  padding: 0;
  overflow: hidden;
  white-space: nowrap;
  border-right: 1px solid #bcbec4;
}
th {
  background: #fff;
  font-size: 12px;
  font-weight: bold;
}
th div {
  display: flex;
  align-items: center;
  padding-right: 5px;
}
th div span {
  flex: 1;
  min-width: 0;
  margin-right: 4px;
  text-align: center;
}
.c12 { width: 12px; }
.c65 { width: 65px; }
.c95 { width: 95px; }
.c307 { width: 307px; }
.c189 { width: 189px; }
.items {
  width: 100%;
  font-family: Roboto, sans-serif;
  font-size: 11px;
}
.items th {
  height: 35px;
  font-family: var(--grid);
}
.items td {
  height: 17px;
  padding: 3px 0 0 2px;
  border-bottom: 1px solid #a6a690;
  background: #fffee0;
  color: #878427;
  line-height: 13px;
}
.items td.mark {
  padding: 0 0 0 2px;
  background: #fff;
  border-bottom: 0;
}
.items td.pic {
  padding-top: 2px;
}
.mark svg {
  display: block;
  width: 8px;
  height: 12px;
}
.items .sel td:not(.mark) {
  background: #878427;
  color: #fffde8;
}
.items .pic input {
  margin: 0 auto;
  border-color: #222;
}
.docs {
  width: 100%;
}
.docs th {
  height: 20px;
}
.docs .doc {
  padding-left: 8px;
}
.docs td {
  height: 20px;
  border-bottom: 1px solid #bcbec4;
  background: #0078d7;
}
.docs tr > :last-child {
  border-right: 0;
}

/* scroll bars */
.vs, .hs {
  flex: none;
  display: flex;
  background: #f0f0f0;
}
.vs {
  flex-direction: column;
  align-items: center;
  width: 15px;
  padding: 5px 0 5px;
}
.hs {
  align-items: center;
  height: 16px;
  padding: 0 20px 0 4px;
}
.vs i, .hs i {
  background: #cdcdcd;
}
.vs i {
  width: 15px;
  margin: 4px 0 5px;
}
.vs .fill {
  flex: 1;
}
.vs .part {
  height: 49px;
}
.hs i {
  width: 17px;
  height: 15px;
  margin-left: 5px;
}
.vs svg, .hs svg {
  flex: none;
  width: 8px;
  height: 8px;
  fill: none;
  stroke: #505050;
  stroke-width: 2;
}
.hs .end {
  margin-left: auto;
}
.vs .end {
  margin-top: auto;
}

/* footer area */
.foot {
  display: flex;
  gap: 11px;
  height: 131px;
  padding: 4px 0 0 4px;
}
.obs {
  display: flex;
  padding-left: 11px;
}
.obs span {
  width: 76px;
}
.obs textarea {
  display: block;
  width: 539px;
  height: 84px;
  resize: none;
  border-top: 1px solid var(--orange);
  background: var(--ro);
}
.foot-btns {
  display: flex;
  gap: 6px;
  margin-top: 7px;
}
.totals {
  display: flex;
  flex-direction: column;
}
.t-row {
  display: flex;
  width: 193px;
  height: 24px;
}
.t-row label {
  flex: 1;
  font: bold 16px/25px var(--grid);
}
.t-row input {
  width: 107px;
  height: 23px;
  padding-bottom: 0;
  font: bold 17px/20px "Noto Sans", sans-serif;
}
.grand label {
  padding-left: 2px;
  font-size: 18px;
  line-height: 32px;
}
.grand input {
  width: 134px;
  height: 27px;
  font-size: 20px;
}

/* bottom tab strip */
.status {
  flex: none;
  display: flex;
  height: 20px;
  padding-top: 2px;
  font: 12px/18px var(--grid);
}
.status span {
  width: 101px;
  height: 18px;
  padding-left: 9px;
  border-bottom: 1px solid #000;
}
.status svg {
  width: 16px;
  height: 18px;
  fill: none;
  stroke: #000;
}
.status i {
  flex: 1;
  border-top: 1px solid #000;
}

/* dialog */
.dialog {
  position: absolute;
  top: 181px;
  left: 446px;
  right: 449px;
  border: 1px solid #5f6675;
  background: var(--bg);
  box-shadow: 0 6px 16px rgba(20, 25, 45, 0.38), 0 0 6px rgba(20, 25, 45, 0.18);
}
.title {
  display: flex;
  align-items: center;
  height: 30px;
  padding: 0 12px 0 10px;
  background: #fff;
}
.app-icon {
  width: 12px;
  height: 14px;
}
.title h2 {
  flex: 1;
  padding-left: 7px;
  font: 12px/16px "Open Sans", "Noto Sans", sans-serif;
}
.title button {
  width: 22px;
  height: 20px;
  margin-left: 24px;
}
.title button svg {
  display: block;
  width: 12px;
  height: 12px;
  margin: 0 auto;
  fill: none;
  stroke: #111;
}
.company {
  display: flex;
  align-items: center;
  gap: 13px;
  height: 33px;
  padding: 0 0 4px 8px;
}
.company label {
  position: relative;
  display: flex;
  align-items: center;
}
.company label span {
  width: 56px;
  padding-top: 4px;
}
.company select {
  width: 223px;
  height: 22px;
  padding: 0 0 1px 2px;
  appearance: none;
  border: 1px solid #6c7486;
  background: linear-gradient(#0078d7, #0078d7) 1px 2px / 97px 16px no-repeat #fdedd5;
  color: #dceeff;
}
.company label::before {
  content: "";
  position: absolute;
  right: 2px;
  top: 2px;
  width: 20px;
  height: 18px;
  border: 1px solid #9ba3b3;
  background: #dfe3ea;
  pointer-events: none;
}
.company label::after {
  content: "";
  position: absolute;
  right: 8px;
  top: 10px;
  border: 4px solid transparent;
  border-top-color: #0d2c58;
  border-bottom: 0;
  pointer-events: none;
}
.company .ro {
  width: 477px;
}
.panel {
  display: flex;
  flex-direction: column;
  margin: 0 2px 0 0;
  border: 1px solid var(--edge);
}
.turnover {
  height: 243px;
}
.turnover .hs {
  padding-right: 21px;
}
.invoices {
  height: 121px;
}
.grid {
  width: 991px;
  font-size: 13px;
}
.grid.stretch {
  width: 100%;
}
.grid th {
  height: 20px;
}
.grid .cut {
  text-align: right;
  border-right: 0;
}
.grid td {
  height: 20px;
  padding: 3px 2px 0;
  border-bottom: 1px solid #bcbec4;
  line-height: 16px;
}
.grid tbody tr:nth-child(3) td, .grid td.mark {
  background: #fff;
}
.grid td.mark {
  padding: 0;
  border-bottom-color: #fff;
}
.grid .sel td:not(.mark) {
  background: #0078d7;
  color: #e4f1ff;
}
.pointer {
  display: block;
  width: 0;
  margin-left: 3px;
  border: 6px solid transparent;
  border-left-color: #000;
  border-right: 0;
}
.info {
  margin: 2px 1px 0 0;
  padding: 1px 7px 5px;
  border: 1px solid #8d9ab5;
  border-radius: 4px;
}
.info legend {
  margin: 0;
  padding: 0;
  font-weight: bold;
}
.info-row {
  display: flex;
  gap: 9px;
}
.info-row + .info-row {
  margin-top: 6px;
}
.info-row span, .info-row input {
  display: block;
  width: 100%;
}
.lower {
  align-items: flex-start;
}
.lower .more {
  display: grid;
  place-items: center;
  width: 20px;
  height: 20px;
  margin: 0 3px 0 auto;
  border: 1px solid #8f9cba;
  background: #f3f4f6;
}
.hint {
  height: 34px;
  padding: 0 8px;
  font: bold 15px/34px "Noto Sans", sans-serif;
}
</style>
